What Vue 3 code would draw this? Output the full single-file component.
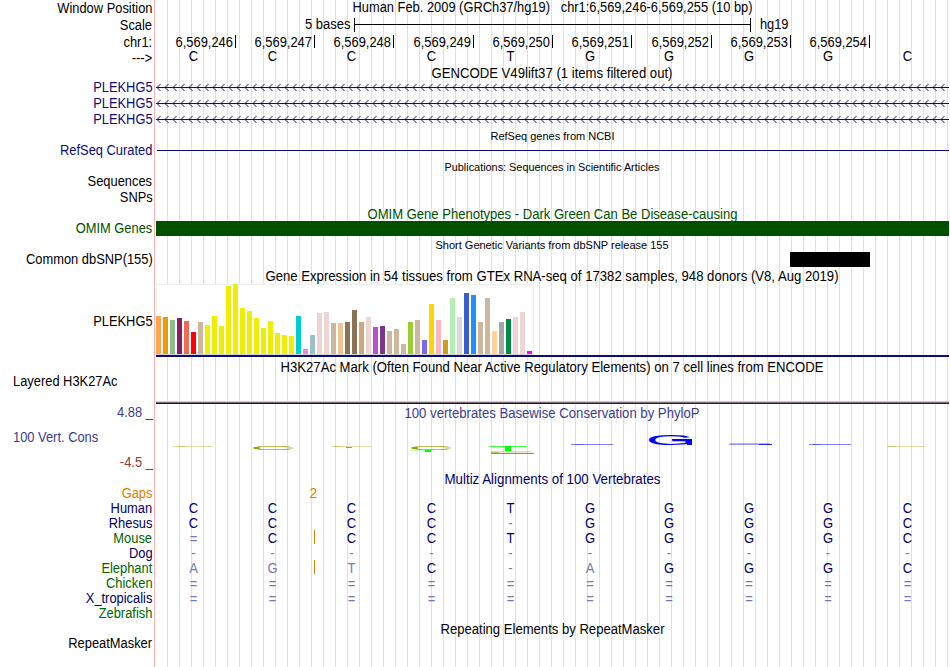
<template>
  <main class="browser">
    <section v-for="(row, i) in rows" :key="i" class="row" :style="{ height: row.h + 'px' }">
      <div :class="['labels', row.low && 'low', row.kind]" :style="{ color: row.color }">
        <span v-for="(label, n) in row.labels || []" :key="n" :class="['label', label.cls]">{{ label.text }}</span>
      </div>
      <svg class="plot" width="794" :height="row.h" :viewBox="`155 0 794 ${row.h}`">
        <text
          v-if="row.title"
          :class="{ small: row.small }"
          :x="row.x"
          :y="row.base"
          :textLength="row.w"
          lengthAdjust="spacingAndGlyphs"
          :fill="row.titleColor || '#000'"
        >{{ row.title }}</text>

        <g v-if="row.kind === 'scale'">
          <text x="305" y="12" textLength="45.5" lengthAdjust="spacingAndGlyphs">5 bases</text>
          <path d="M354.5 1V15M354.5 7.5H750.5M750.5 1V15" stroke="#000" />
          <text x="760" y="12" textLength="28.5" lengthAdjust="spacingAndGlyphs">hg19</text>
        </g>

        <g v-else-if="row.kind === 'ruler'">
          <g v-for="(x, n) in ticks" :key="x">
            <text :x="x - 59.5" y="13" textLength="57.5" lengthAdjust="spacingAndGlyphs">{{ '6,569,' + (246 + n) }}</text>
            <rect :x="x" y="1" width="1" height="13" />
          </g>
        </g>

        <g v-else-if="row.kind === 'gene'">
          <rect x="156" y="7" width="793" height="1" fill="#0c0c78" />
          <path :d="chevrons" fill="none" stroke="#0c0c78" />
        </g>

        <rect v-else-if="row.kind === 'refseq'" x="157" y="7" width="792" height="1" fill="#0c0c78" />
        <rect v-else-if="row.kind === 'omim'" x="156" width="793" height="15" fill="#005000" />
        <rect v-else-if="row.kind === 'snp'" x="790" width="80" height="15" />

        <g v-else-if="row.kind === 'gtex'">
          <rect x="156.5" y="0.5" width="377" height="70" fill="#fff" stroke="#f0f0f0" />
          <rect x="156" y="70" width="378" height="1" fill="#d4d4d4" />
          <rect
            v-for="(bar, n) in tissues"
            :key="n"
            :x="156 + n * 7"
            :y="70 - bar[0]"
            width="5"
            :height="bar[0]"
            :fill="bar[1]"
          />
          <rect x="156" y="71" width="793" height="2" fill="#0c0c78" />
        </g>

        <g v-else-if="row.kind === 'h3k'">
          <rect x="156" y="27" width="793" height="1" fill="#f6cb92" />
          <rect x="156" y="28" width="793" height="1" fill="#816879" />
          <rect x="156" y="29" width="397" height="1" fill="#200c2c" />
          <rect x="553" y="29" width="396" height="1" fill="#261c58" />
        </g>

        <g v-else-if="row.kind === 'phylop'">
          <text
            v-for="(g, n) in logo"
            :key="n"
            class="glyph"
            :fill="g.fill"
            :transform="`translate(${g.x} ${g.y}) scale(${g.w / 67} ${g.h / 73})`"
            x="-5"
            y="-1"
          >{{ g.ch }}</text>
          <rect
            v-for="(s, n) in strokes"
            :key="'s' + n"
            :x="s[0]"
            :y="s[1]"
            :width="s[2]"
            :height="s[3]"
            :fill="s[4]"
            :opacity="s[5]"
          />
        </g>

        <text v-else-if="row.kind === 'gaps'" x="313.5" y="12" text-anchor="middle" fill="#e08000">2</text>

        <g v-if="row.bases" text-anchor="middle">
          <text
            v-for="(ch, n) in row.bases"
            :key="n"
            :transform="`translate(${centers[n]} ${baseline(row, ch)}) scale(0.93 1)`"
            :fill="row.kind === 'seq' ? '#000' : isFaint(row, ch, n) ? '#7878ac' : '#000064'"
          >{{ ch }}</text>
        </g>
        <rect v-if="row.insert" x="314" y="-1" width="1" height="14" fill="#e08000" />
      </svg>
    </section>
  </main>
</template>

<script setup>
const NAVY = '#0c0c78'
const GREEN = '#006400'
const DARK_BLUE = '#000064'
const OLIVE = '#a0a000'

const one = (text) => [{ text }]

const species = [
  ['Human', 'CCCCTGGGGC', DARK_BLUE],
  ['Rhesus', 'CCCC-GGGGC', DARK_BLUE],
  ['Mouse', '=CCCTGGGGC', GREEN, true],
  ['Dog', '----------', DARK_BLUE],
  ['Elephant', 'AGTC-AGGGC', GREEN, true],
  ['Chicken', '==========', GREEN],
  ['X_tropicalis', '==========', DARK_BLUE],
  ['Zebrafish', '', GREEN],
]

const rows = [
  { h: 17, low: true, labels: one('Window Position'), title: 'Human Feb. 2009 (GRCh37/hg19)\u00a0\u00a0\u00a0chr1:6,569,246-6,569,255 (10 bp)', x: 352.5, w: 400, base: 12 },
  { h: 17, low: true, labels: one('Scale'), kind: 'scale' },
  { h: 16, low: true, labels: one('chr1:'), kind: 'ruler' },
  { h: 16, low: true, labels: one('--->'), kind: 'seq', bases: 'CCCCTGGGGC' },
  { h: 14, title: 'GENCODE V49lift37 (1 items filtered out)', x: 431.5, w: 241, base: 12 },
  { h: 16, labels: one('PLEKHG5'), color: NAVY, kind: 'gene' },
  { h: 16, labels: one('PLEKHG5'), color: NAVY, kind: 'gene' },
  { h: 16, labels: one('PLEKHG5'), color: NAVY, kind: 'gene' },
  { h: 15, small: true, title: 'RefSeq genes from NCBI', x: 490.5, w: 124, base: 12 },
  { h: 16, labels: one('RefSeq Curated'), color: NAVY, kind: 'refseq' },
  { h: 15, small: true, title: 'Publications: Sequences in Scientific Articles', x: 444.5, w: 215, base: 12 },
  { h: 16, labels: one('Sequences') },
  { h: 16, labels: one('SNPs') },
  { h: 15, title: 'OMIM Gene Phenotypes - Dark Green Can Be Disease-causing', x: 367.5, w: 370, base: 13, titleColor: '#005000' },
  { h: 16, labels: one('OMIM Genes'), color: '#005000', kind: 'omim' },
  { h: 15, small: true, title: 'Short Genetic Variants from dbSNP release 155', x: 435.5, w: 233, base: 12 },
  { h: 16, labels: one('Common dbSNP(155)'), kind: 'snp' },
  { h: 16, title: 'Gene Expression in 54 tissues from GTEx RNA-seq of 17382 samples, 948 donors (V8, Aug 2019)', x: 265.5, w: 573, base: 13 },
  { h: 74, labels: one('PLEKHG5'), kind: 'gtex' },
  { h: 16, title: 'H3K27Ac Mark (Often Found Near Active Regulatory Elements) on 7 cell lines from ENCODE', x: 280.5, w: 543, base: 14 },
  { h: 31, labels: [{ text: 'Layered H3K27Ac', cls: 'left' }], kind: 'h3k' },
  {
    h: 65,
    labels: [
      { text: '4.88 _' },
      { text: '100 Vert. Cons', cls: 'left' },
      { text: '-4.5 _', cls: 'negative' },
    ],
    color: '#3c3c8c',
    kind: 'phylop',
    title: '100 vertebrates Basewise Conservation by PhyloP',
    titleColor: '#3c3c8c',
    x: 404.5,
    w: 295,
    base: 13,
  },
  { h: 16, title: 'Multiz Alignments of 100 Vertebrates', x: 444.5, w: 216, base: 14, titleColor: DARK_BLUE },
  { h: 15, labels: one('Gaps'), color: '#e08000', kind: 'gaps' },
  ...species.map(([name, bases, color, insert]) => ({ h: 15, labels: one(name), bases, color, insert })),
  { h: 15, title: 'Repeating Elements by RepeatMasker', x: 440.5, w: 224, base: 13 },
  { h: 31, labels: one('RepeatMasker') },
]

const ticks = [235, 314, 393, 473, 552, 631, 711, 790, 869]
const centers = [193.5, 272.5, 351.5, 431.5, 510.5, 590, 669, 749, 828, 907.5]

const chevrons = Array.from({ length: 99 }, (_, n) => `M${160.5 + n * 8} 4l-3.5 3.5l3.5 3.5`).join('')

// elephant substitutions are greyed along with gaps and unaligned bases
const isFaint = (row, ch, n) =>
  ch === '-' || ch === '=' || (row.labels[0].text === 'Elephant' && [0, 1, 2, 5].includes(n))

const baseline = (row, ch) => {
  if (row.kind === 'seq') return 11
  return ch === '=' ? 13 : 12
}

// [height, colour]
const tissues = [
  [38, '#ffa54f'], [37, '#ee9a00'], [34, '#8fbc8f'], [36, '#8b1c62'], [33, '#ee6a50'],
  [22, '#ff0000'], [32, '#cdb79e'], [29, '#eeee00'], [38, '#eeee00'], [28, '#eeee00'],
  [68, '#eeee00'], [70, '#eeee00'], [46, '#eeee00'], [43, '#eeee00'], [36, '#eeee00'],
  [26, '#eeee00'], [33, '#eeee00'], [21, '#eeee00'], [19, '#eeee00'], [18, '#eeee00'],
  [38, '#00cdcd'], [5, '#ee82ee'], [19, '#9ac0cd'], [41, '#eed5d2'], [42, '#eed5d2'],
  [31, '#cdb79e'], [31, '#eec591'], [32, '#8b7355'], [44, '#8b7355'], [32, '#cdaa7d'],
  [37, '#eed5d2'], [27, '#b452cd'], [28, '#7a378b'], [23, '#cdb79e'], [25, '#cdb79e'],
  [10, '#cdb79e'], [32, '#9acd32'], [34, '#cdb79e'], [14, '#7a67ee'], [50, '#ffd700'],
  [34, '#ffb6c1'], [14, '#cd9b1d'], [56, '#b4eeb4'], [37, '#d9d9d9'], [61, '#3a5fcd'],
  [59, '#1e90ff'], [32, '#cdb79e'], [56, '#cdb79e'], [23, '#ffd39b'], [32, '#a6a6a6'],
  [35, '#008b45'], [37, '#eed5d2'], [42, '#eed5d2'], [3, '#ff00ff'],
]

const logo = [
  { ch: 'C', x: 253, y: 45, w: 41, h: 4, fill: OLIVE },
  { ch: 'C', x: 411, y: 45, w: 41, h: 4, fill: OLIVE },
  { ch: 'G', x: 649, y: 40, w: 43, h: 11, fill: '#0000ff' },
]

// letters too flat to read, plus the heavy ends of the taller ones:
// [x, y, width, height, colour, opacity]
const strokes = [
  [173, 41, 40, 1, OLIVE, 0.35],
  [178, 41, 8, 1, OLIVE, 0.35],
  [254, 42, 6, 2, OLIVE, 0.7],
  [260, 41, 28, 1, OLIVE, 0.3],
  [260, 44, 28, 1, OLIVE, 0.3],
  [288, 42, 5, 2, OLIVE, 0.35],
  [332, 41, 39, 1, OLIVE, 0.35],
  [334, 41, 8, 1, OLIVE, 0.35],
  [346, 42, 6, 1, '#00ff00', 1],
  [412, 42, 6, 2, OLIVE, 0.7],
  [418, 41, 28, 1, OLIVE, 0.3],
  [418, 44, 28, 1, OLIVE, 0.3],
  [446, 42, 5, 2, OLIVE, 0.35],
  [410, 45, 23, 1, '#00ff00', 0.25],
  [425, 45, 6, 2, '#00ff00', 1],
  [489, 41, 38, 1, '#00ff00', 0.75],
  [505, 41, 6, 5, '#00ff00', 1],
  [491, 46, 40, 1, OLIVE, 0.35],
  [491, 47, 8, 1, OLIVE, 0.65],
  [499, 47, 34, 1, OLIVE, 0.2],
  [491, 48, 43, 1, '#3030d0', 0.6],
  [571, 39, 42, 1, '#0000ff', 0.5],
  [575, 39, 8, 1, '#0000ff', 0.3],
  [650, 33, 5, 4, '#0000ff', 1],
  [672, 34, 16, 1, '#0000ff', 1],
  [687, 34, 5, 6, '#0000ff', 1],
  [730, 38, 40, 1, '#0000ff', 0.3],
  [729, 39, 30, 1, '#0000ff', 0.4],
  [759, 39, 13, 1, '#0000ff', 0.85],
  [809, 39, 42, 1, '#0000ff', 0.5],
  [813, 39, 8, 1, '#0000ff', 0.3],
  [887, 41, 39, 1, OLIVE, 0.35],
  [888, 41, 8, 1, OLIVE, 0.35],
]
</script>

<style scoped>
.browser {
  width: 949px;
  height: 667px;
  overflow: hidden;
  background:
    linear-gradient(#ffb0b0, #ffb0b0) 154px 0 / 1px 100% no-repeat,
    repeating-linear-gradient(to right, #dcdcff 0 1px, transparent 1px 12px) 167px 0 / 782px 100% no-repeat,
    #fff;
  font-family: 'Liberation Sans', Arial, sans-serif;
  font-size: 14px;
  color: #000;
}

.row {
  display: grid;
  grid-template-columns: 155px 794px;
}

.labels {
  display: flex;
  flex-direction: column;
  align-items: flex-end;
  padding-right: 2.5px;
  line-height: 15px;
  white-space: pre;
}

.labels.low {
  padding-top: 1px;
}

.labels.gtex {
  padding-top: 30px;
}

.labels.phylop {
  gap: 10px;
}

.label {
  transform: scaleX(0.92);
  transform-origin: right;
}

.label.left {
  align-self: flex-start;
  padding-left: 13px;
  transform-origin: 13px 50%;
}

.label.negative {
  color: #8c3c3c;
}

.plot {
  display: block;
  overflow: visible;
}

.plot .small {
  font-size: 11.6px;
}

.plot .glyph {
  font-size: 100px;
}
</style>

<style>
body {
  margin: 0;
  background: #fff;
}
</style>
